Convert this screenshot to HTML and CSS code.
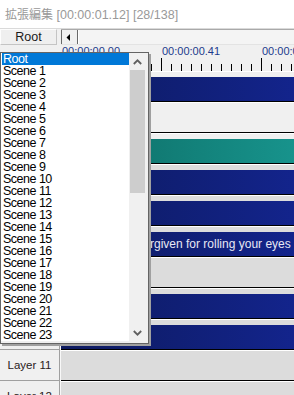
FILE: index.html
```html
<!DOCTYPE html>
<html>
<head>
<meta charset="utf-8">
<link rel="stylesheet" href="styles.css">
</head>
<body>
<div class="title"><span class="cjk">拡張編集</span> [00:00:01.12] [28/138]</div>
<div class="toolbar">
  <div class="rootbtn">Root</div>
  <div class="hscroll">
    <div class="hs-btn"><svg width="4" height="7" viewBox="0 0 4 7"><polygon points="4,0 4,7 0.5,3.5" fill="#000"/></svg></div>
    <div class="hs-track"></div>
  </div>
</div>
<div class="ruler-row">
  <div class="ruler-left"></div>
  <div class="ruler">
    <div class="tcell">00:00:00.00</div>
    <div class="tcell">00:00:00.41</div>
    <div class="tcell">00:00:00.82</div>
  </div>
</div>
<div class="layers">
  <div class="layer light"><div class="lname">Layer 2</div><div class="sep"></div><div class="track"><div class="bar blue"></div></div></div>
  <div class="layer light"><div class="lname">Layer 3</div><div class="sep"></div><div class="track"></div></div>
  <div class="layer light"><div class="lname">Layer 4</div><div class="sep"></div><div class="track"><div class="bar teal"></div></div></div>
  <div class="layer"><div class="lname">Layer 5</div><div class="sep"></div><div class="track"><div class="bar blue"></div></div></div>
  <div class="layer"><div class="lname">Layer 6</div><div class="sep"></div><div class="track"><div class="bar blue"></div></div></div>
  <div class="layer"><div class="lname">Layer 7</div><div class="sep"></div><div class="track"><div class="bar blue"><span class="bartext">forgiven for rolling your eyes</span></div></div></div>
  <div class="layer"><div class="lname">Layer 8</div><div class="sep"></div><div class="track"></div></div>
  <div class="layer"><div class="lname">Layer 9</div><div class="sep"></div><div class="track"><div class="bar blue"></div></div></div>
  <div class="layer"><div class="lname">Layer 10</div><div class="sep"></div><div class="track"><div class="bar blue"></div></div></div>
  <div class="layer"><div class="lname">Layer 11</div><div class="sep"></div><div class="track"></div></div>
  <div class="layer"><div class="lname">Layer 12</div><div class="sep"></div><div class="track"></div></div>
</div>

<div class="dropdown">
  <div class="list">
    <div class="item sel">Root</div>
    <div class="item">Scene 1</div>
    <div class="item">Scene 2</div>
    <div class="item">Scene 3</div>
    <div class="item">Scene 4</div>
    <div class="item">Scene 5</div>
    <div class="item">Scene 6</div>
    <div class="item">Scene 7</div>
    <div class="item">Scene 8</div>
    <div class="item">Scene 9</div>
    <div class="item">Scene 10</div>
    <div class="item">Scene 11</div>
    <div class="item">Scene 12</div>
    <div class="item">Scene 13</div>
    <div class="item">Scene 14</div>
    <div class="item">Scene 15</div>
    <div class="item">Scene 16</div>
    <div class="item">Scene 17</div>
    <div class="item">Scene 18</div>
    <div class="item">Scene 19</div>
    <div class="item">Scene 20</div>
    <div class="item">Scene 21</div>
    <div class="item">Scene 22</div>
    <div class="item">Scene 23</div>
  </div>
  <div class="vscroll">
    <div class="vs-arrow"><svg width="9" height="6" viewBox="0 0 9 6"><polyline points="0.8,5 4.5,1.3 8.2,5" fill="none" stroke="#606060" stroke-width="1.8"/></svg></div>
    <div class="vs-thumb"></div>
    <div class="vs-track"></div>
    <div class="vs-arrow"><svg width="9" height="6" viewBox="0 0 9 6"><polyline points="0.8,1 4.5,4.7 8.2,1" fill="none" stroke="#606060" stroke-width="1.8"/></svg></div>
  </div>
</div>
</body>
</html>
```

FILE: styles.css
```css
* { box-sizing: border-box; }
html, body {
  margin: 0;
  padding: 0;
  width: 294px;
  height: 395px;
  overflow: hidden;
  background: #f0f0f0;
  font-family: "Liberation Sans", "Noto Sans CJK JP", sans-serif;
}

.title {
  height: 29px;
  background: #fff;
  border-bottom: 1px solid #dadada;
  color: #999;
  font-size: 12.5px;
  line-height: 27px;
  padding-left: 5px;
  white-space: nowrap;
}
.cjk {
  font-family: "Noto Sans CJK JP", sans-serif;
  font-size: 12px;
}

.toolbar {
  display: flex;
  height: 16px;
}
.rootbtn {
  width: 57px;
  height: 16px;
  background: #efefef;
  border: 1px solid #c4c4c4;
  border-top-color: #fdfdfd;
  border-left-color: #fdfdfd;
  font-size: 12.5px;
  line-height: 14px;
  text-align: center;
  color: #1a1a1a;
}
.hscroll {
  margin-left: 4px;
  flex: 1;
  display: flex;
  border-top: 1px solid #a9a9a9;
  border-bottom: 1px solid #e3e3e3;
}
.hs-btn {
  width: 17px;
  background: #f0f0f0;
  border-left: 1px solid #696969;
  border-right: 1px solid #696969;
  display: flex;
  align-items: center;
  justify-content: center;
  padding-right: 4px;
}
.hs-track {
  flex: 1;
  background: #f4f4f4;
  border-left: 1px solid #fff;
}

.ruler-row {
  display: flex;
  height: 26px;
}
.ruler-left {
  width: 61px;
  background: #f0f0f0;
}
.ruler {
  flex: 1;
  display: flex;
  overflow: hidden;
  background-color: #f0f0f0;
  background-image:
    repeating-linear-gradient(90deg, #000 0 1px, transparent 1px 100px),
    repeating-linear-gradient(90deg, #000 0 1px, transparent 1px 10px);
  background-size: 100% 13px, 100% 7px;
  background-position: 0 100%, 0 100%;
  background-repeat: no-repeat;
}
.tcell {
  flex: 0 0 100px;
  padding-left: 1px;
  font-size: 11px;
  line-height: 11px;
  padding-top: 1px;
  color: #1b3a8c;
  white-space: nowrap;
}

.layers {
  display: flex;
  flex-direction: column;
}
.layer {
  display: flex;
  height: 31px;
  flex: 0 0 31px;
}
.lname {
  width: 60px;
  background: #f0f0f0;
  border-right: 1px solid #a0a0a0;
  border-bottom: 1px solid #a0a0a0;
  font-size: 11.5px;
  color: #2a2020;
  display: flex;
  align-items: center;
  justify-content: center;
}
.sep {
  width: 1px;
  background: #f8f8f8;
}
.track {
  flex: 1;
  background: #dcdcdc;
  border-top: 1px solid #fff;
  border-bottom: 1px solid #000;
  padding-top: 5px;
}
.layer.light .track {
  background: #f0f0f0;
}
.bar {
  height: 24px;
}
.bar.blue {
  background: linear-gradient(90deg, #0d1a5e, #13248c);
}
.bar.teal {
  background: linear-gradient(90deg, #0d6a63, #17938c);
}
.bartext {
  display: block;
  padding-left: 79px;
  font-size: 12px;
  line-height: 24px;
  color: #e8e8f4;
  white-space: nowrap;
}

.dropdown {
  position: absolute;
  left: 0;
  top: 52px;
  width: 149px;
  height: 292px;
  border: 1px solid #646464;
  padding: 0 2px 2px 0;
  background: #f0f0f0;
  box-shadow: 2px 2px 0 #a0a0a0;
  display: flex;
}
.list {
  width: 128px;
  background: #fff;
  padding-left: 1px;
}
.item {
  height: 12px;
  font-size: 12.5px;
  line-height: 12px;
  letter-spacing: -0.5px;
  padding-left: 1px;
  color: #000;
  white-space: nowrap;
}
.item.sel {
  background: #0078d7;
  color: #fff;
}
.vscroll {
  width: 17px;
  background: #f0f0f0;
  display: flex;
  flex-direction: column;
}
.vs-arrow {
  height: 17px;
  flex: 0 0 17px;
  display: flex;
  align-items: center;
  justify-content: center;
}
.vs-thumb {
  height: 123px;
  margin: 0 1px;
  background: #cdcdcd;
}
.vs-track {
  flex: 1;
}
```
